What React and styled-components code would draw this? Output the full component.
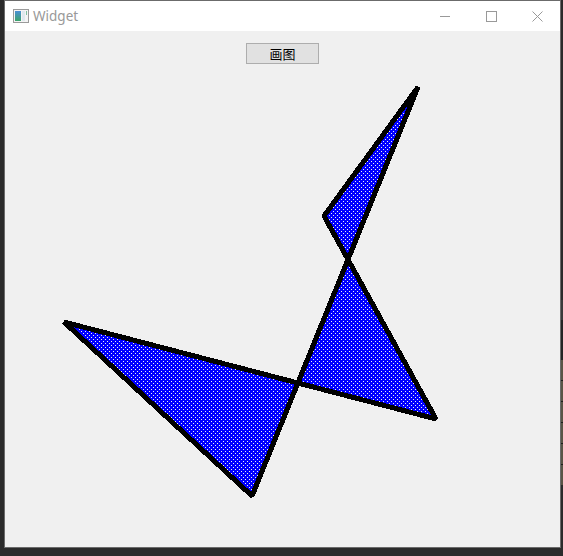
import React from "react";
import styled, { createGlobalStyle } from "styled-components";

const GlobalStyle = createGlobalStyle`
  html, body {
    margin: 0;
    padding: 0;
    background: #2b2b2b;
  }
`;

const Screen = styled.div`
  width: 563px;
  height: 556px;
  display: flex;
  background: #2b2b2b;
  overflow: hidden;
  padding-left: 4px;
  box-sizing: border-box;
`;

const Window = styled.div`
  width: 557px;
  height: 548px;
  flex-shrink: 0;
  border: 1px solid #6b6b6b;
  box-sizing: border-box;
  display: flex;
  flex-direction: column;
  background: #f0f0f0;
`;

const Gutter = styled.div`
  flex: 1;
  display: flex;
  flex-direction: column;
  padding-top: 300px;
`;

const GutterBlock = styled.div`
  height: ${(p) => p.h}px;
  background: ${(p) => p.c};
  border-bottom: ${(p) => (p.line ? "1px solid #1e1e1e" : "none")};
`;

const TitleBar = styled.div`
  height: 30px;
  background: #ffffff;
  display: flex;
  align-items: center;
  flex-shrink: 0;
`;

const AppIcon = styled.svg`
  width: 16px;
  height: 14px;
  margin-left: 8px;
  margin-right: 4px;
`;

const Title = styled.span`
  font-family: "Segoe UI", "Noto Sans", "Liberation Sans", sans-serif;
  font-size: 13.5px;
  color: #999999;
  flex: 1;
`;

const CaptionButton = styled.div`
  width: 46px;
  height: 30px;
  display: flex;
  align-items: center;
  justify-content: center;
`;

const Client = styled.div`
  position: relative;
  flex: 1;
  display: flex;
  justify-content: center;
  padding-top: 12px;
`;

const Canvas = styled.svg`
  position: absolute;
  left: 0;
  top: 0;
  width: 100%;
  height: 100%;
`;

const PaintButton = styled.button`
  position: relative;
  width: 73px;
  height: 21px;
  padding: 0;
  background: #e1e1e1;
  border: 1px solid #adadad;
  font-family: "Noto Sans CJK SC", "Liberation Sans", sans-serif;
  font-size: 13px;
  line-height: 19px;
  color: #000000;
`;

const points = [
  [413, 56],
  [319, 185],
  [431, 388],
  [59, 291],
  [247, 465],
];

export default function App() {
  return (
    <>
      <GlobalStyle />
      <Screen>
        <Window>
          <TitleBar>
            <AppIcon viewBox="0 0 16 14">
              <defs>
                <linearGradient id="ic" x1="0" y1="0" x2="0" y2="1">
                  <stop offset="0" stopColor="#4a8fd6" />
                  <stop offset="1" stopColor="#3aa36a" />
                </linearGradient>
              </defs>
              <rect x="0.5" y="0.5" width="15" height="13" fill="#f4f4f4" stroke="#9a9a9a" />
              <rect x="2" y="2" width="6" height="10" fill="url(#ic)" />
              <rect x="9" y="2" width="3" height="10" fill="#dfe8ee" />
              <rect x="13" y="2" width="1" height="4" fill="#7fbfa0" />
            </AppIcon>
            <Title>Widget</Title>
            <CaptionButton>
              <svg width="10" height="10" viewBox="0 0 10 10">
                <line x1="0" y1="5.5" x2="10" y2="5.5" stroke="#999" strokeWidth="1" />
              </svg>
            </CaptionButton>
            <CaptionButton>
              <svg width="11" height="11" viewBox="0 0 11 11">
                <rect x="0.5" y="0.5" width="10" height="10" fill="none" stroke="#999" strokeWidth="1" />
              </svg>
            </CaptionButton>
            <CaptionButton>
              <svg width="11" height="11" viewBox="0 0 11 11">
                <path d="M0.5 0.5 L10.5 10.5 M10.5 0.5 L0.5 10.5" stroke="#999" strokeWidth="1" />
              </svg>
            </CaptionButton>
          </TitleBar>
          <Client>
            <Canvas>
              <defs>
                <pattern id="dense" width="4" height="4" patternUnits="userSpaceOnUse">
                  <rect width="4" height="4" fill="#0000ff" />
                  <rect x="0" y="0" width="1" height="1" fill="#f0f0f0" />
                  <rect x="2" y="2" width="1" height="1" fill="#f0f0f0" />
                </pattern>
              </defs>
              <polygon
                points={points.map((p) => p.join(",")).join(" ")}
                fill="url(#dense)"
                fillRule="evenodd"
                stroke="#000000"
                strokeWidth="5"
                strokeLinejoin="bevel"
                shapeRendering="crispEdges"
              />
            </Canvas>
            <PaintButton>画图</PaintButton>
          </Client>
        </Window>
        <Gutter>
          <GutterBlock h={20} c="#3a3a3a" />
          <GutterBlock h={40} c="#242424" />
          <GutterBlock h={20} c="#5a5446" line />
          <GutterBlock h={20} c="#5a5446" line />
          <GutterBlock h={20} c="#5a5446" line />
          <GutterBlock h={20} c="#5a5446" line />
          <GutterBlock h={20} c="#5a5446" line />
          <GutterBlock h={20} c="#5a5446" />
        </Gutter>
      </Screen>
    </>
  );
}
